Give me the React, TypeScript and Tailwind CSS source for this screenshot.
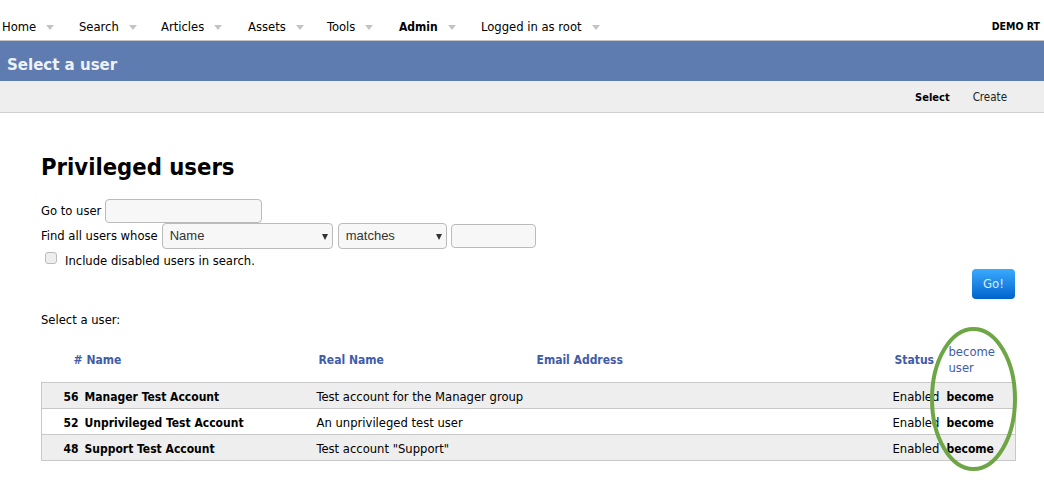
const navItems = [
  { label: "Home", w: "w-[77px]" },
  { label: "Search", w: "w-[82px]" },
  { label: "Articles", w: "w-[87px]" },
  { label: "Assets", w: "w-[79px]" },
  { label: "Tools", w: "w-[72px]" },
  { label: "Admin", w: "w-[82px]", bold: true },
  { label: "Logged in as root", w: "w-[130px]" },
];

const rows = [
  { id: 56, name: "Manager Test Account", real: "Test account for the Manager group", shade: true },
  { id: 52, name: "Unprivileged Test Account", real: "An unprivileged test user", shade: false },
  { id: 48, name: "Support Test Account", real: 'Test account "Support"', shade: true },
];

function Caret() {
  return <span className="ml-[10px] inline-block h-0 w-0 translate-y-[1px] border-x-[4.5px] border-t-[5px] border-x-transparent border-t-[#c4c4c4]" />;
}

function Arrow() {
  return <span className="absolute right-[4px] top-[10px] h-0 w-0 border-x-[3.5px] border-t-[6px] border-x-transparent border-t-[#333]" />;
}

export default function App() {
  return (
    <div className="relative min-h-[495px] w-[1044px] overflow-hidden bg-white text-[12.9px] text-black [font-family:'DejaVu_Sans_Condensed','DejaVu_Sans',sans-serif]">
      <nav className="flex h-[41px] items-end justify-between border-b border-[#c4c4c4] pb-[4px] pl-[2px] pr-[4px]">
        <div className="flex">
          {navItems.map((n) => (
            <div key={n.label} className={`${n.w} flex items-center whitespace-nowrap ${n.bold ? "pt-[1px] text-[12px] font-bold" : ""}`}>
              {n.label}
              <Caret />
            </div>
          ))}
        </div>
        <div className="text-[10.5px] font-bold leading-[19px]">DEMO RT</div>
      </nav>

      <div className="flex h-[40px] items-center bg-[#5e7cb0] px-[7px] pt-[7px] text-[16.7px] font-bold text-[#eef2f8]">Select a user</div>

      <div className="flex h-[32px] items-center justify-end gap-[23px] border-b border-[#cfcfcf] bg-[#eeeeee] pr-[37px] pt-[3px] text-[11.5px]">
        <span className="text-[11px] font-bold">Select</span>
        <span className="text-[#222]">Create</span>
      </div>

      <main className="pl-[41px] pr-[28px] pt-[36px]">
        <h1 className="text-[23.6px] font-bold leading-[36px]">Privileged users</h1>

        <div className="mt-[14px] flex h-[24px] items-center gap-[4px]">
          <span>Go to user</span>
          <input className="h-[24px] w-[157px] rounded-[4px] border border-[#bbb] bg-[#f7f7f7]" />
        </div>

        <div className="flex h-[26px] items-center">
          <span className="mr-[4px]">Find all users whose</span>
          <div className="relative mr-[5px] flex h-[26px] w-[171px] items-center rounded-[4px] border border-[#bbb] bg-[#f7f7f7] pl-[7px] text-[13px] text-[#333] [font-family:'Liberation_Sans',sans-serif]">
            Name
            <Arrow />
          </div>
          <div className="relative mr-[4px] flex h-[26px] w-[109px] items-center rounded-[4px] border border-[#bbb] bg-[#f7f7f7] pl-[7px] text-[13px] text-[#333] [font-family:'Liberation_Sans',sans-serif]">
            matches
            <Arrow />
          </div>
          <input className="h-[24px] w-[85px] rounded-[4px] border border-[#bbb] bg-[#f7f7f7]" />
        </div>

        <div className="flex h-[24px] items-center pl-[4px]">
          <span className="mb-[6px] h-[12px] w-[12px] rounded-[3px] border border-[#bbb] bg-[#eeeeee]" />
          <span className="ml-[8px]">Include disabled users in search.</span>
        </div>

        <div className="-mt-[4px] flex justify-end pr-[1px]">
          <button className="h-[30px] w-[43px] rounded-[4px] bg-gradient-to-b from-[#3aabff] to-[#0062cc] text-[13px] text-[#dcecff]">Go!</button>
        </div>

        <p className="mt-[13px] leading-[16px]">Select a user:</p>

        <table className="mt-[7px] w-[974px] table-fixed border-collapse">
          <colgroup>
            <col className="w-[41px]" />
            <col className="w-[233px]" />
            <col className="w-[220px]" />
            <col className="w-[356px]" />
            <col className="w-[54px]" />
            <col className="w-[70px]" />
          </colgroup>
          <thead>
            <tr className="h-[47px] align-top text-[12px] font-bold text-[#3f5ca8]">
              <th className="pt-[16px] text-right font-bold">#</th>
              <th className="pl-[4px] pt-[16px] text-left font-bold">Name</th>
              <th className="pl-[3px] pt-[16px] text-left font-bold">Real Name</th>
              <th className="pl-[1px] pt-[16px] text-left font-bold">Email Address</th>
              <th className="pl-[3px] pt-[16px] text-left font-bold">Status</th>
              <th className="pl-[3px] pt-[9px] text-left text-[12.9px] font-normal leading-[16px]">become<br />user</th>
            </tr>
          </thead>
          <tbody className="border border-[#c8c8c8]">
            {rows.map((r) => (
              <tr key={r.id} className={`h-[26px] border-b border-[#c8c8c8] ${r.shade ? "bg-[#eeeeee]" : "bg-white"}`}>
                <td className="pr-[4px] pt-[3px] text-right text-[12px] font-bold">{r.id}</td>
                <td className="whitespace-nowrap pl-[2px] pt-[3px] text-[12px] font-bold">{r.name}</td>
                <td className="whitespace-nowrap pl-[1px] pt-[3px]">{r.real}</td>
                <td />
                <td className="pl-[1px] pt-[3px]">Enabled</td>
                <td className="pl-[1px] pt-[3px] text-[12px] font-bold">become</td>
              </tr>
            ))}
          </tbody>
        </table>
      </main>

      <svg className="pointer-events-none absolute left-[926px] top-[324px]" width="96" height="150" viewBox="0 0 96 150">
        <ellipse cx="47.5" cy="75" rx="41.5" ry="70" fill="none" stroke="#6ea646" strokeWidth="4" />
      </svg>
    </div>
  );
}
